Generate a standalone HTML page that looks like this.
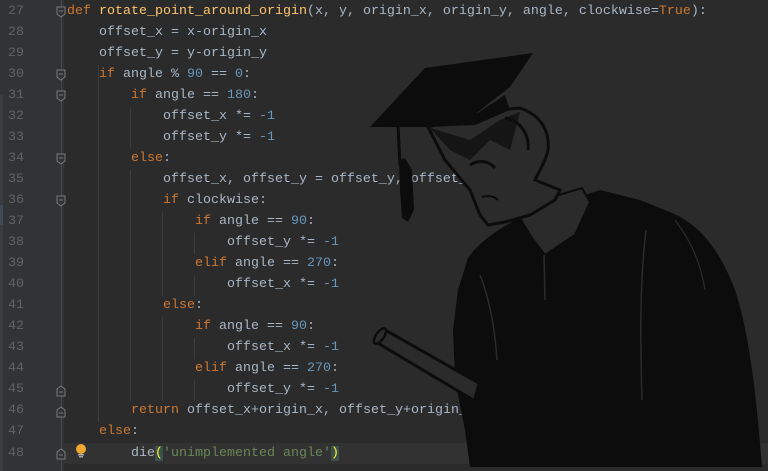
<!DOCTYPE html>
<html><head><meta charset="utf-8"><style>
html,body{margin:0;padding:0;}
body{width:768px;height:471px;overflow:hidden;background:#2b2b2b;position:relative;font-family:"Liberation Mono","DejaVu Sans Mono",monospace;font-size:13.33px;}
#gut{position:absolute;left:0;top:0;width:64px;height:471px;background:#313335;}
#sb{position:absolute;left:0;top:95px;width:3px;height:376px;background:#3a3c3e;}
#sb2{position:absolute;left:0;top:205px;width:3px;height:20px;background:#3d4b58;}
.cur{position:absolute;left:64px;top:443px;width:704px;height:21px;background:#323232;}
.ln{position:absolute;left:0;width:24px;text-align:right;color:#606366;line-height:21px;height:21px;}
.code{position:absolute;left:67px;white-space:pre;color:#a9b7c6;line-height:21px;height:21px;}
.k{color:#cc7832}.f{color:#ffc66d}.n{color:#6897bb}.s{color:#6a8759}
.br{background:#3b514d;color:#ffef28}
.g{position:absolute;width:1px;background:#3b3b3b;}
.fold{position:absolute;left:56px;width:10px;height:12px;}
#foldline{position:absolute;left:61px;top:0;width:1px;height:471px;background:#45484a;}
</style></head><body>
<div id="gut"></div><div id="sb"></div><div id="sb2"></div>
<div class="cur"></div>
<div id="foldline"></div>
<div class="g" style="left:98px;top:65px;height:357px"></div>
<div class="g" style="left:130px;top:107px;height:42px"></div>
<div class="g" style="left:130px;top:170px;height:231px"></div>
<div class="g" style="left:162px;top:212px;height:84px"></div>
<div class="g" style="left:162px;top:317px;height:84px"></div>
<div class="g" style="left:194px;top:233px;height:21px"></div>
<div class="g" style="left:194px;top:275px;height:21px"></div>
<div class="g" style="left:194px;top:338px;height:21px"></div>
<div class="g" style="left:194px;top:380px;height:21px"></div>

<svg class="fold" style="top:6px" viewBox="0 0 10 12"><path d="M1,1 H9 V8 L5,11 L1,8 Z" fill="#313335" stroke="#7a7a7a"/><path d="M3,5 H7" stroke="#7a7a7a"/></svg>
<svg class="fold" style="top:69px" viewBox="0 0 10 12"><path d="M1,1 H9 V8 L5,11 L1,8 Z" fill="#313335" stroke="#7a7a7a"/><path d="M3,5 H7" stroke="#7a7a7a"/></svg>
<svg class="fold" style="top:90px" viewBox="0 0 10 12"><path d="M1,1 H9 V8 L5,11 L1,8 Z" fill="#313335" stroke="#7a7a7a"/><path d="M3,5 H7" stroke="#7a7a7a"/></svg>
<svg class="fold" style="top:153px" viewBox="0 0 10 12"><path d="M1,1 H9 V8 L5,11 L1,8 Z" fill="#313335" stroke="#7a7a7a"/><path d="M3,5 H7" stroke="#7a7a7a"/></svg>
<svg class="fold" style="top:195px" viewBox="0 0 10 12"><path d="M1,1 H9 V8 L5,11 L1,8 Z" fill="#313335" stroke="#7a7a7a"/><path d="M3,5 H7" stroke="#7a7a7a"/></svg>
<svg class="fold" style="top:385px" viewBox="0 0 10 12"><path d="M1,11 H9 V4 L5,1 L1,4 Z" fill="#313335" stroke="#7a7a7a"/><path d="M3,7 H7" stroke="#7a7a7a"/></svg>
<svg class="fold" style="top:406px" viewBox="0 0 10 12"><path d="M1,11 H9 V4 L5,1 L1,4 Z" fill="#313335" stroke="#7a7a7a"/><path d="M3,7 H7" stroke="#7a7a7a"/></svg>
<svg class="fold" style="top:448px" viewBox="0 0 10 12"><path d="M1,11 H9 V4 L5,1 L1,4 Z" fill="#313335" stroke="#7a7a7a"/><path d="M3,7 H7" stroke="#7a7a7a"/></svg>

<div class="ln" style="top:1px">27</div><div class="code" style="top:1px"><span class="k">def</span> <span class="f">rotate_point_around_origin</span>(x, y, origin_x, origin_y, angle, clockwise=<span class="k">True</span>):</div>
<div class="ln" style="top:22px">28</div><div class="code" style="top:22px">    offset_x = x-origin_x</div>
<div class="ln" style="top:43px">29</div><div class="code" style="top:43px">    offset_y = y-origin_y</div>
<div class="ln" style="top:64px">30</div><div class="code" style="top:64px">    <span class="k">if</span> angle % <span class="n">90</span> == <span class="n">0</span>:</div>
<div class="ln" style="top:85px">31</div><div class="code" style="top:85px">        <span class="k">if</span> angle == <span class="n">180</span>:</div>
<div class="ln" style="top:106px">32</div><div class="code" style="top:106px">            offset_x *= <span class="n">-1</span></div>
<div class="ln" style="top:127px">33</div><div class="code" style="top:127px">            offset_y *= <span class="n">-1</span></div>
<div class="ln" style="top:148px">34</div><div class="code" style="top:148px">        <span class="k">else</span>:</div>
<div class="ln" style="top:169px">35</div><div class="code" style="top:169px">            offset_x, offset_y = offset_y, offset_x</div>
<div class="ln" style="top:190px">36</div><div class="code" style="top:190px">            <span class="k">if</span> clockwise:</div>
<div class="ln" style="top:211px">37</div><div class="code" style="top:211px">                <span class="k">if</span> angle == <span class="n">90</span>:</div>
<div class="ln" style="top:232px">38</div><div class="code" style="top:232px">                    offset_y *= <span class="n">-1</span></div>
<div class="ln" style="top:253px">39</div><div class="code" style="top:253px">                <span class="k">elif</span> angle == <span class="n">270</span>:</div>
<div class="ln" style="top:274px">40</div><div class="code" style="top:274px">                    offset_x *= <span class="n">-1</span></div>
<div class="ln" style="top:295px">41</div><div class="code" style="top:295px">            <span class="k">else</span>:</div>
<div class="ln" style="top:316px">42</div><div class="code" style="top:316px">                <span class="k">if</span> angle == <span class="n">90</span>:</div>
<div class="ln" style="top:337px">43</div><div class="code" style="top:337px">                    offset_x *= <span class="n">-1</span></div>
<div class="ln" style="top:358px">44</div><div class="code" style="top:358px">                <span class="k">elif</span> angle == <span class="n">270</span>:</div>
<div class="ln" style="top:379px">45</div><div class="code" style="top:379px">                    offset_y *= <span class="n">-1</span></div>
<div class="ln" style="top:400px">46</div><div class="code" style="top:400px">        <span class="k">return</span> offset_x+origin_x, offset_y+origin_y</div>
<div class="ln" style="top:421px">47</div><div class="code" style="top:421px">    <span class="k">else</span>:</div>
<div class="ln" style="top:443px">48</div><div class="code" style="top:443px">        die<span class="br">(</span><span class="s">'unimplemented angle'</span><span class="br">)</span></div>
<svg style="position:absolute;left:74px;top:443px" width="14" height="16" viewBox="0 0 14 16"><circle cx="7" cy="6" r="5" fill="#f0a732"/><rect x="4" y="11" width="6" height="1.5" fill="#aaa"/><rect x="5" y="13" width="4" height="1.5" fill="#aaa"/></svg>

<svg style="position:absolute;left:0;top:0" width="768" height="471" viewBox="0 0 768 471">
 <path d="M468,258 C480,240 505,225 525,215 L555,205 L600,190 L640,200 L672,213 C700,225 720,250 735,290 C748,330 755,380 762,467 L470,467 L465,430 L455,380 L453,330 L458,290 Z" fill="#0c0c0c"/>
 <path d="M520,218 L555,196 L582,188 L590,202 L575,235 L545,255 L532,238 Z" fill="#2b2b2b" stroke="#0c0c0c" stroke-width="2"/>
 <path d="M544,255 L545,300" stroke="#2b2b2b" stroke-width="1.5"/>
 <path d="M428,127 C450,120 490,110 520,108 C540,115 550,130 548,150 C546,160 540,170 535,180 L560,190 L555,200 L530,215 L505,222 L488,225 L480,215 L470,190 L445,160 Z" fill="#2b2b2b" stroke="#0c0c0c" stroke-width="3"/>
 <path d="M430,128 L470,140 L500,120 L520,112 L510,150 L490,140 L470,160 L450,150 Z" fill="#151515"/>
 <path d="M505,118 C520,120 530,135 528,150" stroke="#0c0c0c" stroke-width="3" fill="none"/>
 <path d="M470,165 C478,160 488,160 495,168" stroke="#0c0c0c" stroke-width="3" fill="none"/>
 <path d="M482,197 C488,195 494,196 498,200" stroke="#0c0c0c" stroke-width="2" fill="none"/>
 <path d="M370,127 L425,68 L533,53 L510,87 L470,118 L428,127 Z" fill="#0c0c0c"/>
 <path d="M428,127 L470,118 L505,95 L510,110 L475,125 Z" fill="#0c0c0c"/>
 <path d="M398,125 L400,165" stroke="#0c0c0c" stroke-width="3"/>
 <path d="M399,160 L405,158 L412,170 L414,210 L408,222 L402,218 L400,190 Z" fill="#0c0c0c"/>
 <path d="M646,230 C640,280 640,330 642,400" stroke="#2b2b2b" stroke-width="1.5" fill="none"/>
 <path d="M480,275 C490,300 495,330 497,360" stroke="#2b2b2b" stroke-width="1.5" fill="none"/>
 <path d="M675,220 C690,240 700,260 705,290" stroke="#2b2b2b" stroke-width="1.2" fill="none"/>
 <path d="M376,342 L385,330 L500,395 L490,410 Z" fill="#2b2b2b" stroke="#0c0c0c" stroke-width="3"/>
 <ellipse cx="380" cy="336" rx="4" ry="9" transform="rotate(35 380 336)" fill="#2b2b2b" stroke="#0c0c0c" stroke-width="2.5"/>
 <path d="M478,382 L498,380 L520,400 L510,440 L495,450 L480,438 L470,410 Z" fill="#0c0c0c"/>
</svg>
</body></html>
